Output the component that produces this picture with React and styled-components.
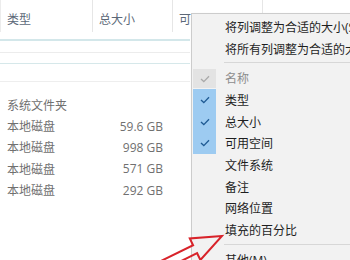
import styled, { createGlobalStyle } from "styled-components";

const GlobalStyle = createGlobalStyle`
html, body {
  margin: 0;
  padding: 0;
  width: 350px;
  height: 260px;
  overflow: hidden;
  background: #ffffff;
}
body {
  font-family: "Open Sans", "Noto Sans CJK SC", sans-serif;
  font-size: 12px;
}
`;

const drives = [
  { name: "系统文件夹", size: "" },
  { name: "本地磁盘", size: "59.6 GB" },
  { name: "本地磁盘", size: "998 GB" },
  { name: "本地磁盘", size: "571 GB" },
  { name: "本地磁盘", size: "292 GB" },
];

const menuTop = [
  "将列调整为合适的大小(S)",
  "将所有列调整为合适的大小(A)",
];

const columns = [
  { label: "名称", state: "disabled" },
  { label: "类型", state: "checked" },
  { label: "总大小", state: "checked" },
  { label: "可用空间", state: "checked" },
  { label: "文件系统" },
  { label: "备注" },
  { label: "网络位置" },
  { label: "填充的百分比" },
];

function Check({ color }) {
  return (
    <svg width="10" height="8" viewBox="0 0 10 8">
      <polyline points="1,4 3.8,6.6 9,1.2" fill="none" stroke={color} strokeWidth="1.3" />
    </svg>
  );
}

export default function App() {
  return (
    <Page>
      <GlobalStyle />
      <Header>
        <HeadCell $w={92}>类型</HeadCell>
        <HeadCell $w={80}>总大小</HeadCell>
        <HeadCell $w={90}>可用空间</HeadCell>
      </Header>
      <Rule $gap={7} $color="#d3e7ea" $h={2} />
      <Rule $gap={11} $color="#ececec" $h={1} />
      <Rule $gap={10} $color="#d6e8ea" $h={1} />
      <Rule $gap={17} $color="#eeeeee" $h={1} />
      <List>
        {drives.map((d, i) => (
          <Row key={i}>
            <Name>{d.name}</Name>
            <Size>{d.size}</Size>
          </Row>
        ))}
      </List>

      <Menu>
        {menuTop.map((t) => (
          <Item key={t}>
            <CheckCell />
            <Label>{t}</Label>
          </Item>
        ))}
        <Separator />
        {columns.map((c) => (
          <Item key={c.label}>
            <CheckCell $state={c.state}>
              {c.state === "checked" && <Check color="#1f5a93" />}
              {c.state === "disabled" && <Check color="#a9a9a9" />}
            </CheckCell>
            <Label $disabled={c.state === "disabled"}>{c.label}</Label>
          </Item>
        ))}
        <Separator />
        <Item>
          <CheckCell />
          <Label>其他(M)...</Label>
        </Item>
      </Menu>

      <Arrow width="350" height="260" viewBox="0 0 350 260">
        <polygon
          points="222,236 189.8,238.4 193.1,245.2 130.2,276.1 134.2,284.1 197.1,253.2 200.4,260"
          fill="none"
          stroke="#d8232a"
          strokeWidth="2"
          strokeLinejoin="miter"
        />
      </Arrow>
    </Page>
  );
}

const Page = styled.div`
position: relative;
width: 350px;
height: 260px;
overflow: hidden;
background: #ffffff;
`;

const Header = styled.div`
display: flex;
height: 32px;
border-left: 1px solid #ececec;
`;

const HeadCell = styled.div`
width: ${(p) => p.$w}px;
flex: none;
box-sizing: border-box;
padding: 0 0 0 6px;
display: flex;
align-items: center;
padding-top: 6px;
color: #5c6878;
border-right: 1px solid #e6e6e6;
white-space: nowrap;
overflow: hidden;
`;

const Rule = styled.div`
margin-top: ${(p) => p.$gap}px;
height: ${(p) => p.$h}px;
width: 190px;
background: ${(p) => p.$color};
`;

const List = styled.div`
margin-top: 12px;
display: flex;
flex-direction: column;
padding-left: 7px;
`;

const Row = styled.div`
display: flex;
align-items: center;
height: 21.4px;
color: #707070;
`;

const Name = styled.div`
width: 85px;
white-space: nowrap;
`;

const Size = styled.div`
width: 71px;
text-align: right;
white-space: nowrap;
`;

const Menu = styled.div`
position: absolute;
left: 191px;
top: 13px;
width: 220px;
height: 300px;
box-sizing: border-box;
padding: 2px 0 0 1px;
background: #f2f2f2;
border: 1px solid #cccccc;
box-shadow: 2px 2px 3px rgba(0, 0, 0, 0.18);
z-index: 2;
`;

const Item = styled.div`
display: flex;
align-items: center;
height: 21.7px;
`;

const CheckCell = styled.div`
width: 23px;
align-self: stretch;
flex: none;
display: flex;
align-items: center;
justify-content: center;
background: ${(p) =>
  p.$state === "checked" ? "#9dcbf1" : p.$state === "disabled" ? "#e3e3e3" : "transparent"};
margin: ${(p) => (p.$state === "disabled" ? "2px 0 1px" : "0")};
`;

const Label = styled.div`
margin-left: 9px;
white-space: nowrap;
color: ${(p) => (p.$disabled ? "#8d8d8d" : "#1e1e1e")};
`;

const Separator = styled.div`
height: 1px;
margin: 3px 0 4px 31px;
background: #d7d7d7;
`;

const Arrow = styled.svg`
position: absolute;
left: 0;
top: 0;
z-index: 3;
pointer-events: none;
`;
